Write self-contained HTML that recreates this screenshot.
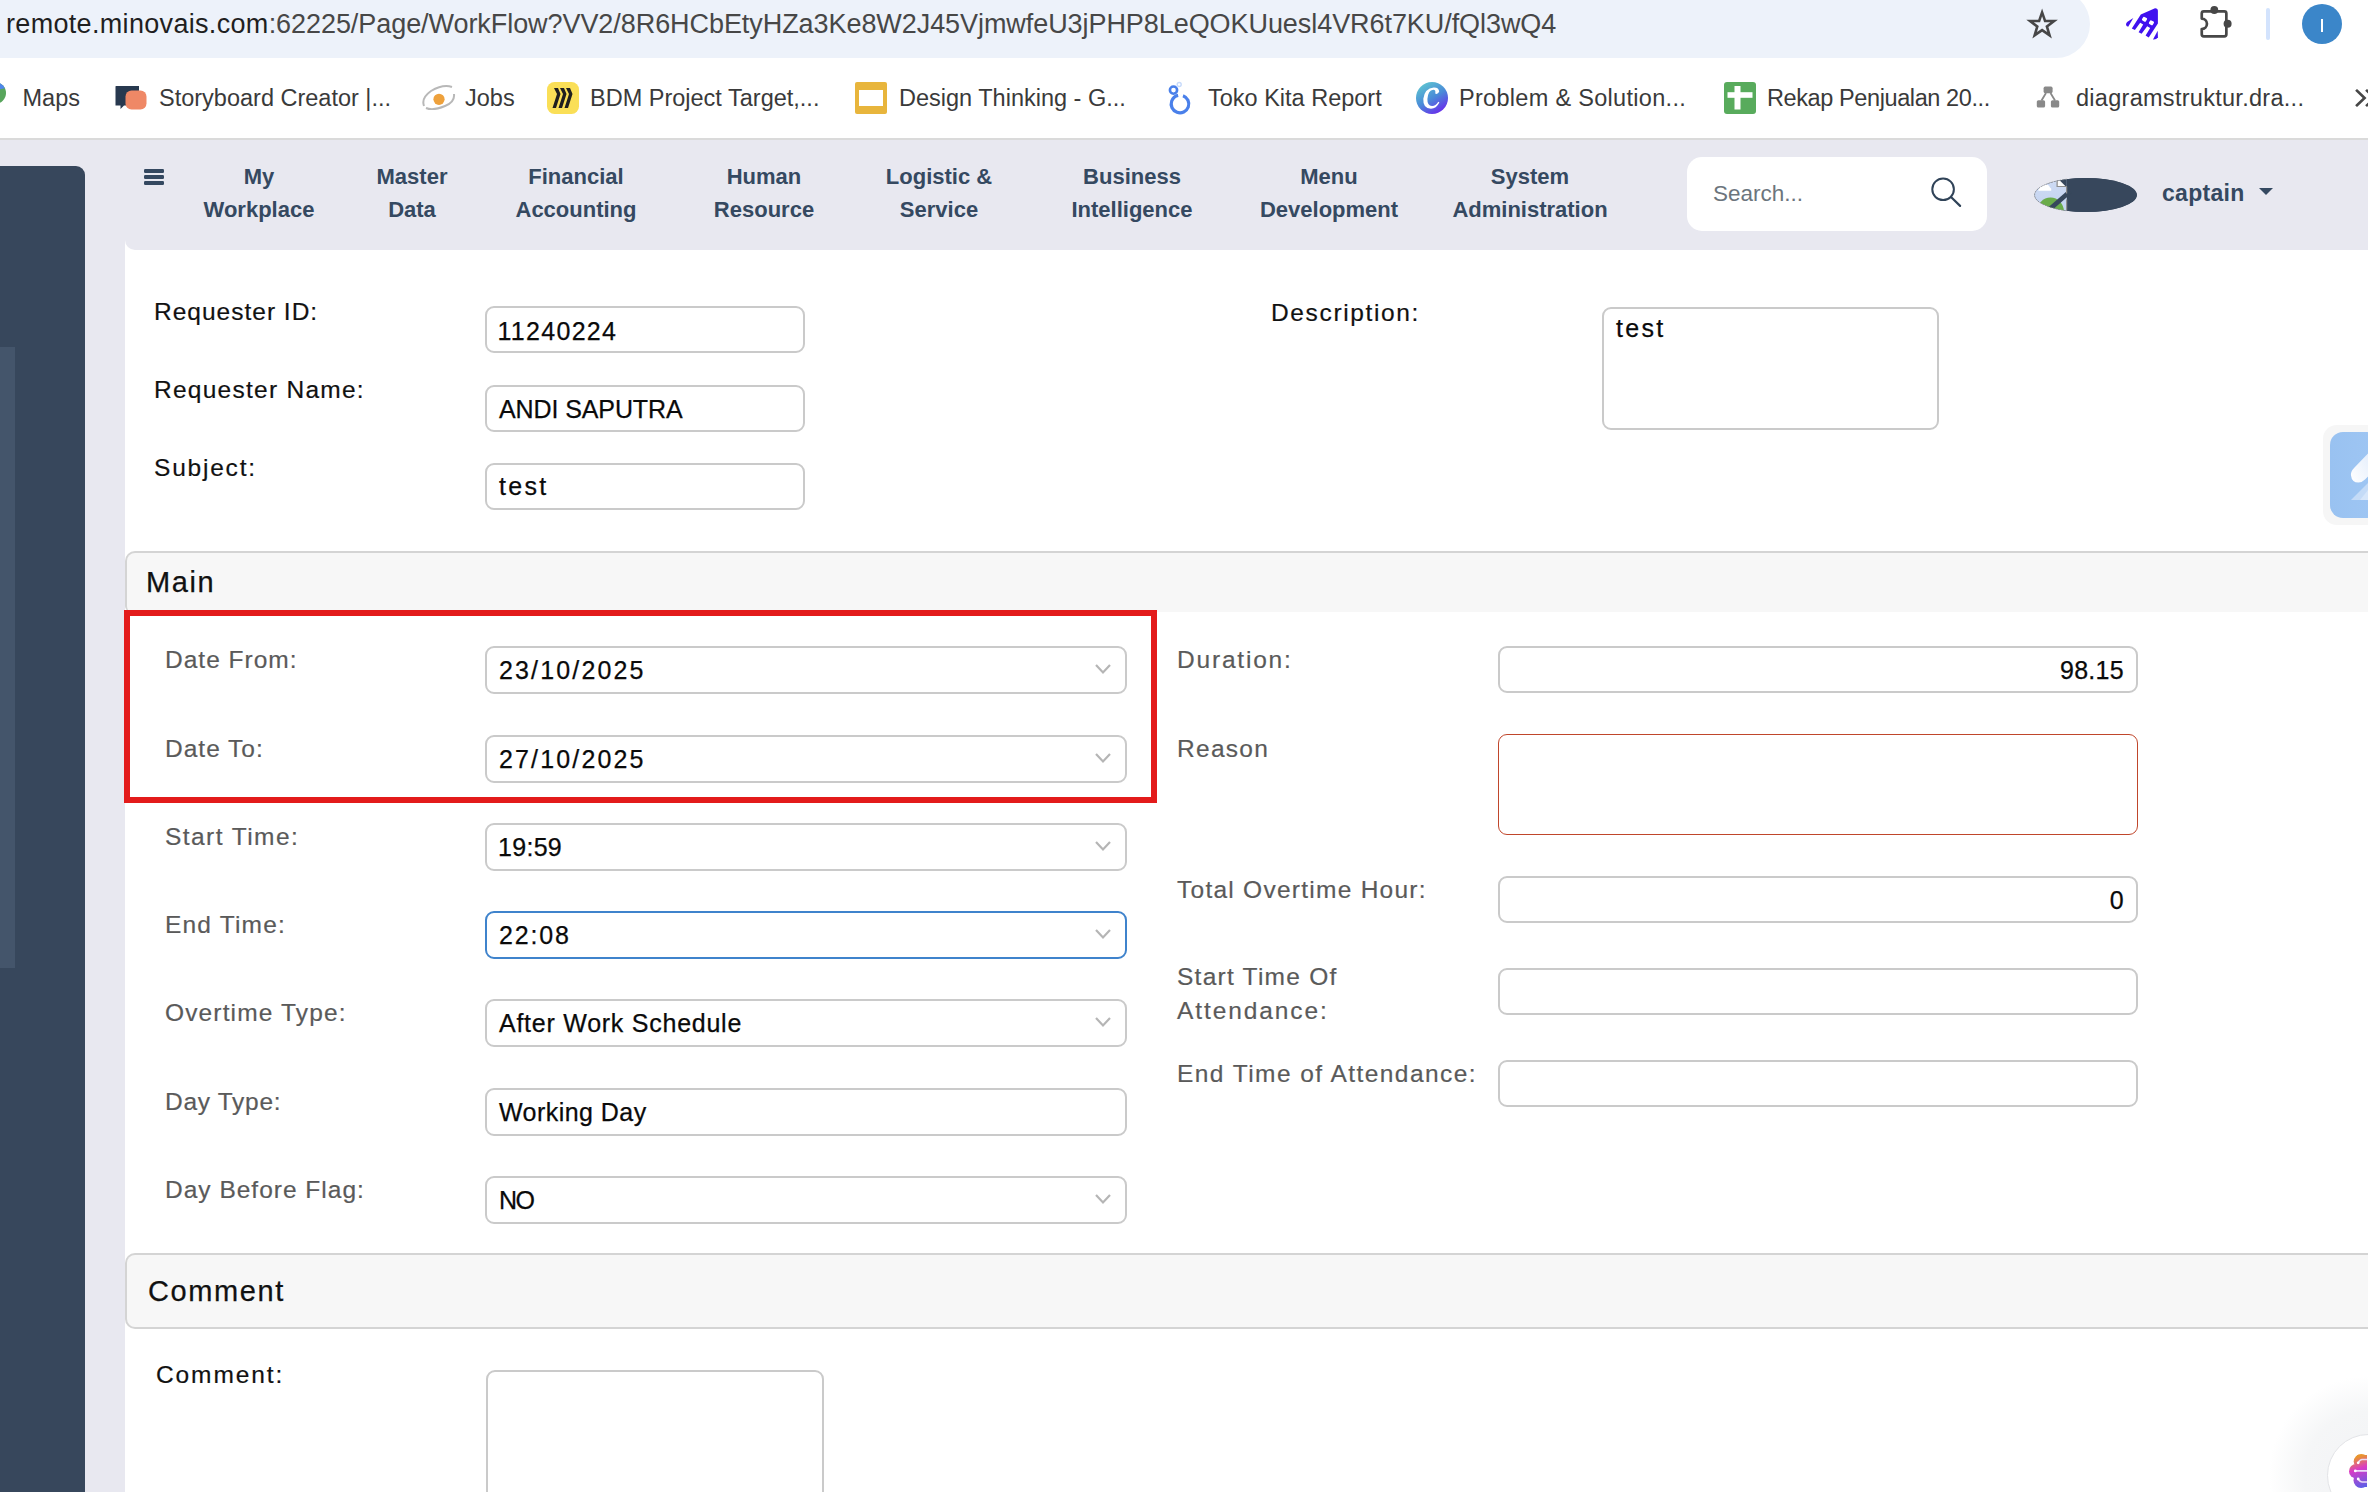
<!DOCTYPE html>
<html><head><meta charset="utf-8">
<style>
*{margin:0;padding:0;box-sizing:border-box}
html,body{width:2368px;height:1492px;overflow:hidden;background:#fff;font-family:"Liberation Sans",sans-serif}
.a{position:absolute}
.t{position:absolute;line-height:1;white-space:nowrap}
#urlbar{left:-40px;top:-10px;width:2130px;height:68px;background:#edf2fa;border-radius:0 34px 34px 0}
.url{left:6px;top:11px;font-size:27px;color:#474747}
.url b{font-weight:normal;color:#1f1f1f;letter-spacing:0.32px}
.url{letter-spacing:-0.065px}
.bm{top:87px;font-size:23.5px;color:#3a3a3a}
#bmline{left:0;top:138px;width:2368px;height:2px;background:#dadada}
#app{left:0;top:140px;width:2368px;height:1352px;background:#e8e8f0}
#side{left:0;top:166px;width:85px;height:1326px;background:#37475c;border-top-right-radius:9px}
#strip{left:0;top:347px;width:15px;height:621px;background:#44556b}
#content{left:125px;top:240px;width:2243px;height:1252px;background:#fff}
#nav{left:125px;top:140px;width:2243px;height:110px;background:#e8e8f0;border-bottom-left-radius:10px}
.nv{top:160px;font-size:22px;font-weight:bold;color:#354961;line-height:33.3px;text-align:center;width:200px;white-space:nowrap}
.lbl{font-size:24.5px;letter-spacing:1px;color:#111;-webkit-text-stroke:0.2px #111}
.lg{-webkit-text-stroke-color:#5a5a5a}
.lg{color:#5a5a5a}
.inp{position:absolute;border:2px solid #cacaca;border-radius:9px;background:#fff}
.val{font-size:25px;letter-spacing:0.3px;color:#0a0a0a;-webkit-text-stroke:0.25px #0a0a0a}
.chev{position:absolute;width:18px;height:12px}
.hdr{position:absolute;left:125px;width:2260px;background:#f7f7f7;border:2px solid #d4d4d4;border-right:none;border-radius:10px 0 0 6px}
.hdt{font-size:29px;letter-spacing:1.6px;color:#111;-webkit-text-stroke:0.25px #111}
</style></head><body>
<!-- browser top -->
<div class="a" id="urlbar"></div>
<div class="t url"><b>remote.minovais.com</b>:62225/Page/WorkFlow?VV2/8R6HCbEtyHZa3Ke8W2J45VjmwfeU3jPHP8LeQOKUuesl4VR6t7KU/fQl3wQ4</div>

<!-- bookmarks -->
<div class="t bm" style="left:22.5px">Maps</div>
<div class="t bm" style="left:159px">Storyboard Creator |...</div>
<div class="t bm" style="left:465px">Jobs</div>
<div class="t bm" style="left:590px">BDM Project Target,...</div>
<div class="t bm" style="left:899px">Design Thinking - G...</div>
<div class="t bm" style="left:1208px">Toko Kita Report</div>
<div class="t bm" style="left:1459px;letter-spacing:0.3px">Problem &amp; Solution...</div>
<div class="t bm" style="left:1767px;letter-spacing:-0.4px">Rekap Penjualan 20...</div>
<div class="t bm" style="left:2076px;letter-spacing:0.28px">diagramstruktur.dra...</div>
<div class="a" id="bmline"></div>

<!-- app -->
<div class="a" id="app"></div>
<div class="a" id="side"></div>
<div class="a" id="strip"></div>
<div class="a" id="content"></div>
<div class="a" id="nav"></div>

<!-- nav items -->
<div class="t nv" style="left:159px">My<br>Workplace</div>
<div class="t nv" style="left:312px">Master<br>Data</div>
<div class="t nv" style="left:476px">Financial<br>Accounting</div>
<div class="t nv" style="left:664px">Human<br>Resource</div>
<div class="t nv" style="left:839px">Logistic &amp;<br>Service</div>
<div class="t nv" style="left:1032px">Business<br>Intelligence</div>
<div class="t nv" style="left:1229px">Menu<br>Development</div>
<div class="t nv" style="left:1430px">System<br>Administration</div>

<!-- search -->
<div class="a" style="left:1687px;top:157px;width:300px;height:74px;background:#fff;border-radius:15px"></div>
<div class="t" style="left:1713px;top:183px;font-size:22.5px;color:#6c757d">Search...</div>

<!-- user -->
<div class="a" style="left:2035px;top:178px;width:102px;height:34px;border-radius:50%;background:#37475c"></div>
<div class="t" style="left:2162px;top:182px;font-size:23px;font-weight:bold;color:#354961;letter-spacing:0.3px">captain</div>


<!-- browser chrome icons -->
<svg class="a" style="left:2024px;top:7px" width="36" height="34" viewBox="0 0 36 34"><path d="M18.10,1.40 L22.00,12.63 L33.89,12.87 L24.42,20.05 L27.86,31.43 L18.10,24.64 L8.34,31.43 L11.78,20.05 L2.31,12.87 L14.20,12.63 Z M18.10,9.30 L20.15,15.18 L26.37,15.31 L21.41,19.08 L23.21,25.04 L18.10,21.48 L12.99,25.04 L14.79,19.08 L9.83,15.31 L16.05,15.18 Z" fill="#474747" fill-rule="evenodd"/></svg>
<svg class="a" style="left:2115px;top:0px" width="50" height="48" viewBox="0 0 50 48">
 <path d="M42.9,11 Q42.9,8.2 40,8.3 L25.8,14.5 L16.8,28.4 L19.9,30.1 L25.2,22.8 L28.2,24.4 L23.6,32.2 L26.6,33.8 L32.2,26.3 L35.2,28.1 L30.6,35.6 L33.7,37.5 L42.9,23.6 Z" fill="#4011ef"/>
 <rect x="27.3" y="17.2" width="4.4" height="4.1" rx="1" transform="rotate(30 29.5 19.3)" fill="#fff"/>
 <rect x="34.2" y="20.7" width="4.4" height="4.1" rx="1" transform="rotate(30 36.4 22.8)" fill="#fff"/>
 <path d="M18.3,18.1 L13.2,26.8 Q11,26.5 11,24.5 Q11,22.8 12.5,21.8 Z" fill="#4011ef"/>
 <path d="M42.7,30.8 L42.9,37.2 Q41.5,39.8 38,39.5 Z" fill="#4011ef"/>
</svg>
<svg class="a" style="left:2195px;top:0px" width="44" height="44" viewBox="0 0 44 44">
 <path d="M6.75,13.4 Q6.75,11.35 8.8,11.35 L29.3,11.35 Q31.35,11.35 31.35,13.4 L31.35,34.3 Q31.35,36.35 29.3,36.35 L8.8,36.35 Q6.75,36.35 6.75,34.3 L6.75,29 A5.2,5.2 0 0 0 6.75,18.6 Z" fill="none" stroke="#474747" stroke-width="2.7" stroke-linejoin="round"/>
 <circle cx="19.3" cy="10" r="3.9" fill="#474747"/><circle cx="32.6" cy="23.8" r="4" fill="#474747"/>
</svg>
<div class="a" style="left:2266px;top:8px;width:4px;height:32px;border-radius:2px;background:#d3e3fd"></div>
<div class="a" style="left:2302px;top:4px;width:40px;height:40px;border-radius:50%;background:#3b86c9"></div>
<div class="a" style="left:2321px;top:19px;width:2.4px;height:13px;background:#fff"></div>

<!-- bookmark icons -->
<svg class="a" style="left:0;top:80px" width="10" height="30" viewBox="0 0 10 30"><defs><clipPath id="mc"><circle cx="-5" cy="13" r="11"/></clipPath></defs><g clip-path="url(#mc)"><rect x="-20" y="0" width="30" height="30" fill="#58a55c"/><polygon points="-20,0 10,0 10,7 -20,14" fill="#4f86ec"/></g></svg>
<svg class="a" style="left:114px;top:84px" width="36" height="28" viewBox="0 0 36 28">
 <path d="M1.5,2.5 Q1.5,2 2,2 L25,2 L25,21.5 L10,21.5 L6.5,25 L6.5,21.5 L1.5,21.5 Z" fill="#28394f"/>
 <rect x="11.5" y="6.5" width="21" height="19" rx="6" fill="#ef8866"/>
</svg>
<svg class="a" style="left:421px;top:84px" width="36" height="28" viewBox="0 0 36 28">
 <path d="M3,22 Q0,14 10,7 Q22,0 31,3" fill="none" stroke="#b8b8b8" stroke-width="2"/>
 <path d="M33,10 Q34,18 24,22 Q12,27 5,24" fill="none" stroke="#b8b8b8" stroke-width="2"/>
 <circle cx="18" cy="15.3" r="5.6" fill="#eea13c"/>
</svg>
<svg class="a" style="left:547px;top:82px" width="32" height="32" viewBox="0 0 32 32">
 <rect x="0" y="0" width="32" height="32" rx="7.5" fill="#fadf57"/>
 <path d="M7,6 L11,6 L13.5,12 L9,26 L5.5,26 L10,12 Z" fill="#1f1f1f"/>
 <path d="M13,6 L17,6 L19.5,12 L15,26 L11.5,26 L16,12 Z" fill="#1f1f1f"/>
 <path d="M19,6 L23,6 L25.5,12 L21,26 L17.5,26 L22,12 Z" fill="#1f1f1f"/>
</svg>
<svg class="a" style="left:855px;top:82px" width="32" height="32" viewBox="0 0 32 32">
 <rect x="0" y="0" width="32" height="32" rx="2" fill="#e8b53c"/>
 <rect x="4" y="8" width="24" height="16" fill="#fff"/>
</svg>
<svg class="a" style="left:1164px;top:80px" width="32" height="36" viewBox="0 0 32 36">
 <circle cx="16" cy="24" r="8.8" fill="none" stroke="#4a80ea" stroke-width="3.2" stroke-dasharray="50 5" transform="rotate(-70 16 24)"/>
 <circle cx="9.5" cy="10.1" r="3.6" fill="none" stroke="#4a80ea" stroke-width="2.6"/>
 <circle cx="15.2" cy="4.5" r="2" fill="none" stroke="#c6dafb" stroke-width="1.4"/>
</svg>
<svg class="a" style="left:1416px;top:82px" width="32" height="32" viewBox="0 0 32 32">
 <defs><linearGradient id="cg" x1="0.2" y1="0" x2="0.8" y2="1"><stop offset="0" stop-color="#5ec7d0"/><stop offset="0.5" stop-color="#4a8bd8"/><stop offset="1" stop-color="#6b22ee"/></linearGradient></defs>
 <circle cx="16" cy="16" r="16" fill="url(#cg)"/>
 <path d="M23.2,9.8 Q23,5.3 17.8,5.4 Q8.6,6.2 7.3,16.8 Q6.8,26.7 15,26.7 Q20.2,26.5 23.4,20.4 L22.3,19.7 Q19.3,24.2 16,24 Q11.1,23.6 11.4,17 Q12,8.2 17.3,7.7 Q20.1,7.7 19.2,11.6 Q21.6,12.8 23.2,9.8 Z" fill="#fff"/>
</svg>
<svg class="a" style="left:1724px;top:82px" width="32" height="32" viewBox="0 0 32 32">
 <rect x="0" y="0" width="32" height="32" rx="3" fill="#58ab5c"/>
 <rect x="3.5" y="10.2" width="25" height="5.6" fill="#fff"/>
 <rect x="10.5" y="4" width="6" height="23.5" fill="#fff"/>
</svg>
<svg class="a" style="left:2034px;top:84px" width="28" height="26" viewBox="0 0 28 26">
 <rect x="9.6" y="2.6" width="9" height="6.6" rx="1.6" fill="#898989"/>
 <rect x="2.8" y="16.2" width="8.3" height="7.3" rx="1.6" fill="#898989"/>
 <rect x="16.9" y="16.2" width="8.3" height="7.3" rx="1.6" fill="#898989"/>
 <path d="M12,9 L7.5,16.5 M16.5,9 L21,16.5" stroke="#898989" stroke-width="1.8"/>
</svg>
<svg class="a" style="left:2352px;top:86px" width="16" height="24" viewBox="0 0 16 24"><path d="M5,4.8 L12.6,12 L5,19.2 M15,4.8 L22.6,12 L15,19.2" fill="none" stroke="#474747" stroke-width="2.6" stroke-linecap="square"/></svg>

<!-- hamburger -->
<div class="a" style="left:144.4px;top:169px;width:20px;height:3.9px;border-radius:1.2px;background:#344860"></div>
<div class="a" style="left:144.4px;top:175px;width:20px;height:3.9px;border-radius:1.2px;background:#344860"></div>
<div class="a" style="left:144.4px;top:181.3px;width:20px;height:3.9px;border-radius:1.2px;background:#344860"></div>

<!-- search icon -->
<svg class="a" style="left:1925px;top:172px" width="44" height="40" viewBox="0 0 44 40"><circle cx="18.1" cy="17.3" r="10.8" fill="none" stroke="#304358" stroke-width="2"/><line x1="26" y1="25" x2="35.1" y2="33.9" stroke="#304358" stroke-width="2.2" stroke-linecap="round"/></svg>

<!-- user avatar broken img + caret -->
<svg class="a" style="left:2034px;top:177px" width="106" height="38" viewBox="0 0 106 38">
 <defs><clipPath id="ec"><ellipse cx="51.5" cy="18" rx="51" ry="17"/></clipPath>
 <linearGradient id="skyg" x1="0" y1="0" x2="0" y2="1"><stop offset="0" stop-color="#cfdcf5"/><stop offset="1" stop-color="#c2d1ee"/></linearGradient></defs>
 <g clip-path="url(#ec)">
  <rect x="0" y="0" width="106" height="38" fill="#37475c"/>
  <rect x="0" y="0" width="32.8" height="38" fill="url(#skyg)"/>
  <path d="M4.3,13.8 L17.2,13.8 Q18,11.3 15.8,10.2 Q14.8,7.2 11,7.5 Q7.5,7.8 5.6,10.3 Q4.3,11.8 4.3,13.8 Z" fill="#fff"/>
  <ellipse cx="16.5" cy="35" rx="13.5" ry="14.4" fill="#6aac4a"/>
  <path d="M23.1,0 L23.1,9.5 L32.8,9.5 L32.8,0 Z" fill="#37475c"/>
  <path d="M23.1,3.2 L23.1,9.5 L31.8,9.5 L25.6,3.2 Z" fill="#fafafa"/>
  <path d="M23.1,3.2 L23.1,9.5 L32.8,9.5" fill="none" stroke="#8e8e8e" stroke-width="1.2"/>
  <line x1="13" y1="34.5" x2="36" y2="14.5" stroke="#37475c" stroke-width="4.6"/>
  <path d="M32.6,9.5 L32.6,16.5 M32.6,22.5 L32.6,34" stroke="#8e8e8e" stroke-width="1.2"/>
 </g>
 <path d="M32.8,2.2 A51,17 0 0 0 32.8,33.8" fill="none" stroke="#8a8a8a" stroke-width="0.8" stroke-dasharray="1.6 1.2"/>
</svg>
<svg class="a" style="left:2258px;top:187px" width="16" height="9" viewBox="0 0 16 9"><polygon points="1,1 15,1 8,8" fill="#354961"/></svg>

<!-- floating widget right -->
<div class="a" style="left:2323px;top:425px;width:60px;height:100px;border-radius:14px;background:#f6f6f6"></div>
<div class="a" style="left:2330px;top:432px;width:50px;height:86px;border-radius:13px;background:linear-gradient(90deg,#99c2f1,#9fc6f3)"></div>
<svg class="a" style="left:2340px;top:450px" width="28" height="60" viewBox="0 0 28 60"><defs><linearGradient id="pg" x1="0" y1="1" x2="1" y2="0"><stop offset="0" stop-color="#ffffff"/><stop offset="1" stop-color="#e6effc"/></linearGradient></defs><path d="M28,3.6 L14.5,17.5 Q10.5,21.5 11,25.5 Q11.8,32.6 18.5,32.6 Q22,32.5 25,29.5 L28,26.5 Z" fill="url(#pg)"/><path d="M28,33 L11,49.9 L28,49.9 Z" fill="#c4dbf7"/><path d="M28,40 L20,49.9 L28,49.9 Z" fill="#d6e6fa"/></svg>

<!-- bottom right brain widget -->
<div class="a" style="left:2268px;top:1375px;width:200px;height:200px;border-radius:50%;background:radial-gradient(circle,#f2f3f5 0%,#f5f6f7 45%,rgba(255,255,255,0) 70%)"></div>
<div class="a" style="left:2327px;top:1434px;width:83px;height:83px;border-radius:50%;background:#fff;border:1px solid #e3e4e7"></div>
<svg class="a" style="left:2347px;top:1451px" width="21" height="41" viewBox="0 0 21 41">
 <defs><linearGradient id="bg1" gradientUnits="userSpaceOnUse" x1="7" y1="4" x2="18" y2="37"><stop offset="0.08" stop-color="#e9962c"/><stop offset="0.42" stop-color="#d93cc6"/><stop offset="1" stop-color="#5660e8"/></linearGradient>
 <clipPath id="bclip"><rect x="0" y="0" width="19.9" height="41"/></clipPath></defs>
 <g clip-path="url(#bclip)">
 <circle cx="14.3" cy="10.5" r="7.6" fill="url(#bg1)"/>
 <circle cx="9.2" cy="20.2" r="7.2" fill="url(#bg1)"/>
 <circle cx="14.1" cy="29.5" r="7.6" fill="url(#bg1)"/>
 <rect x="10" y="4" width="12" height="32" fill="url(#bg1)"/>
 <path d="M11.2,11.8 Q13,8.5 15,8.5 L21,8.5 M8.3,19.9 L21,19.9 M11.2,28 Q13,31 15,31 L21,31" fill="none" stroke="#ecdcf8" stroke-width="1.6"/>
 <circle cx="11.2" cy="11.8" r="1.4" fill="#fff"/><circle cx="8.3" cy="19.9" r="1.4" fill="#fff"/><circle cx="11.2" cy="28" r="1.4" fill="#fff"/>
 </g>
</svg>

<!-- top form -->
<div class="t lbl" style="left:154px;top:300px">Requester ID:</div>
<div class="t lbl" style="left:154px;top:378px;letter-spacing:1.26px">Requester Name:</div>
<div class="t lbl" style="left:154px;top:456px;letter-spacing:1.79px">Subject:</div>
<div class="inp" style="left:485px;top:306px;width:320px;height:47px"></div>
<div class="inp" style="left:485px;top:385px;width:320px;height:47px"></div>
<div class="inp" style="left:485px;top:463px;width:320px;height:47px"></div>
<div class="t val" style="left:499px;top:319px;letter-spacing:1.3px;margin-left:-1.5px">11240224</div>
<div class="t val" style="left:499px;top:397px;letter-spacing:-0.1px">ANDI SAPUTRA</div>
<div class="t val" style="left:499px;top:474px;letter-spacing:2.3px">test</div>
<div class="t lbl" style="left:1271px;top:301px;letter-spacing:1.64px">Description:</div>
<div class="inp" style="left:1602px;top:307px;width:337px;height:123px"></div>
<div class="t val" style="left:1616px;top:316px;letter-spacing:2.3px">test</div>

<!-- main header -->
<div class="hdr" style="top:551px;height:61px;border-bottom:none;border-radius:10px 0 0 6px"></div>
<div class="t hdt" style="left:146px;top:568px">Main</div>

<!-- main rows left -->
<div class="t lbl lg" style="left:165px;top:648px">Date From:</div>
<div class="inp" style="left:485px;top:646px;width:642px;height:48px"></div>
<div class="t val" style="left:499px;top:658px;letter-spacing:2.15px">23/10/2025</div>
<svg class="chev" style="left:1094px;top:663px" viewBox="0 0 18 12"><polyline points="2,2 9,9.5 16,2" fill="none" stroke="#b5b5b5" stroke-width="2.2"/></svg>
<div class="t lbl lg" style="left:165px;top:737px">Date To:</div>
<div class="inp" style="left:485px;top:735px;width:642px;height:48px"></div>
<div class="t val" style="left:499px;top:747px;letter-spacing:2.15px">27/10/2025</div>
<svg class="chev" style="left:1094px;top:752px" viewBox="0 0 18 12"><polyline points="2,2 9,9.5 16,2" fill="none" stroke="#b5b5b5" stroke-width="2.2"/></svg>
<div class="t lbl lg" style="left:165px;top:825px;letter-spacing:1.44px">Start Time:</div>
<div class="inp" style="left:485px;top:823px;width:642px;height:48px"></div>
<div class="t val" style="left:499px;top:835px;letter-spacing:0.3px;margin-left:-1px">19:59</div>
<svg class="chev" style="left:1094px;top:840px" viewBox="0 0 18 12"><polyline points="2,2 9,9.5 16,2" fill="none" stroke="#b5b5b5" stroke-width="2.2"/></svg>
<div class="t lbl lg" style="left:165px;top:913px;letter-spacing:1.19px">End Time:</div>
<div class="inp" style="left:485px;top:911px;width:642px;height:48px;border-color:#3f83cc"></div>
<div class="t val" style="left:499px;top:923px;letter-spacing:1.85px">22:08</div>
<svg class="chev" style="left:1094px;top:928px" viewBox="0 0 18 12"><polyline points="2,2 9,9.5 16,2" fill="none" stroke="#b5b5b5" stroke-width="2.2"/></svg>
<div class="t lbl lg" style="left:165px;top:1001px;letter-spacing:1.14px">Overtime Type:</div>
<div class="inp" style="left:485px;top:999px;width:642px;height:48px"></div>
<div class="t val" style="left:499px;top:1011px;letter-spacing:0.75px">After Work Schedule</div>
<svg class="chev" style="left:1094px;top:1016px" viewBox="0 0 18 12"><polyline points="2,2 9,9.5 16,2" fill="none" stroke="#b5b5b5" stroke-width="2.2"/></svg>
<div class="t lbl lg" style="left:165px;top:1090px;letter-spacing:0.71px">Day Type:</div>
<div class="inp" style="left:485px;top:1088px;width:642px;height:48px"></div>
<div class="t val" style="left:499px;top:1100px;letter-spacing:0.45px">Working Day</div>
<div class="t lbl lg" style="left:165px;top:1178px">Day Before Flag:</div>
<div class="inp" style="left:485px;top:1176px;width:642px;height:48px"></div>
<div class="t val" style="left:499px;top:1188px;letter-spacing:-1.5px">NO</div>
<svg class="chev" style="left:1094px;top:1193px" viewBox="0 0 18 12"><polyline points="2,2 9,9.5 16,2" fill="none" stroke="#b5b5b5" stroke-width="2.2"/></svg>
<!-- right col -->
<div class="t lbl lg" style="left:1177px;top:648px;letter-spacing:1.8px">Duration:</div>
<div class="inp" style="left:1498px;top:646px;width:640px;height:47px"></div>
<div class="t val" style="left:1701px;width:423px;text-align:right;top:658px">98.15</div>
<div class="t lbl lg" style="left:1177px;top:737px;letter-spacing:1.28px">Reason</div>
<div class="inp" style="left:1498px;top:734px;width:640px;height:101px;border:1.7px solid #c0462b"></div>
<div class="t lbl lg" style="left:1177px;top:878px;letter-spacing:1.26px">Total Overtime Hour:</div>
<div class="inp" style="left:1498px;top:876px;width:640px;height:47px"></div>
<div class="t val" style="left:1701px;width:423px;text-align:right;top:888px">0</div>
<div class="inp" style="left:1498px;top:968px;width:640px;height:47px"></div>
<div class="t lbl lg" style="left:1177px;top:1062px;letter-spacing:1.44px">End Time of Attendance:</div>
<div class="inp" style="left:1498px;top:1060px;width:640px;height:47px"></div>
<div class="t lbl lg" style="left:1177px;line-height:34px;top:960px;letter-spacing:1.25px">Start Time Of<br><span style="letter-spacing:1.9px">Attendance:</span></div>
<!-- red annotation box -->
<div class="a" style="left:124px;top:610px;width:1033px;height:193px;border:6px solid #e31b1b"></div>

<!-- comment header -->
<div class="hdr" style="top:1253px;height:76px;border-radius:10px 0 0 10px"></div>
<div class="t hdt" style="left:148px;top:1277px;letter-spacing:1.6px">Comment</div>
<div class="t lbl" style="left:156px;top:1363px;letter-spacing:1.9px">Comment:</div>
<div class="inp" style="left:486px;top:1370px;width:338px;height:140px"></div>
</body></html>
